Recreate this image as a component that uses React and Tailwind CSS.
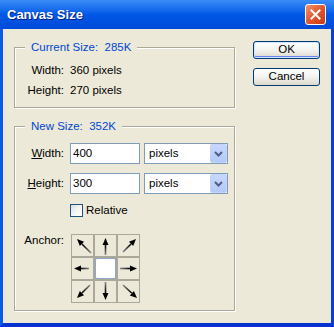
import React from "react";

function Arrow({ from, to, id }) {
  // draws an arrow from tail (from) to tip (to) inside a 21x21 cell
  const [x1, y1] = from;
  const [x2, y2] = to;
  const dx = x2 - x1;
  const dy = y2 - y1;
  const len = Math.sqrt(dx * dx + dy * dy);
  const ux = dx / len;
  const uy = dy / len;
  const hl = 7;
  const hw = 3;
  const bx = x2 - ux * hl;
  const by = y2 - uy * hl;
  const pts = `${x2},${y2} ${bx - uy * hw},${by + ux * hw} ${bx + uy * hw},${by - ux * hw}`;
  return (
    <svg width="21" height="21" viewBox="0 0 21 21">
      <defs>
        <linearGradient id={id} gradientUnits="userSpaceOnUse" x1={x1} y1={y1} x2={x2} y2={y2}>
          <stop offset="0" stopColor="#8a8a8a" />
          <stop offset="0.5" stopColor="#111" />
          <stop offset="1" stopColor="#000" />
        </linearGradient>
      </defs>
      <line x1={x1} y1={y1} x2={bx} y2={by} stroke={`url(#${id})`} strokeWidth="1.6" />
      <polygon points={pts} fill="#000" />
    </svg>
  );
}

function Cell({ children, center }) {
  if (center) {
    return <div className="w-[21px] h-[21px] bg-white border border-[#8fa7c9] rounded-[2px]" />;
  }
  return <div className="w-[21px] h-[21px] bg-[#ece9d8] flex items-center justify-center">{children}</div>;
}

function Select() {
  return (
    <div className="w-[84px] h-[21px] bg-white border border-[#7f9db9] flex items-center">
      <span className="pl-[4px] flex-1">pixels</span>
      <div className="w-[17px] h-[19px] rounded-[2px] bg-gradient-to-b from-[#c7d8fd] to-[#b2c9f8] border border-[#c3d3fd] flex items-center justify-center">
        <svg width="9" height="6" viewBox="0 0 9 6">
          <path d="M1 1 L4.5 4.5 L8 1" fill="none" stroke="#4d6185" strokeWidth="2" />
        </svg>
      </div>
    </div>
  );
}

function Button({ label, isDefault }) {
  return (
    <button
      className={
        "w-[67px] h-[18px] rounded-[3px] border border-[#003c74] bg-gradient-to-b from-[#ffffff] via-[#f3f3ef] to-[#dcd8cc] text-black flex items-center justify-center leading-none " +
        (isDefault ? "shadow-[inset_0_0_0_1px_#cee7ff,inset_0_-1px_0_1px_#6982ee]" : "")
      }
    >
      {label}
    </button>
  );
}

export default function App() {
  return (
    <div className="w-[334px] h-[327px] flex flex-col bg-[#0058e6] font-['Liberation_Sans',Arial,sans-serif] text-[11.5px] text-black">
      {/* title bar */}
      <div className="h-[29px] flex items-center justify-between pl-[7px] pr-[8px] bg-gradient-to-b from-[#3a8cf8] via-[#0058e6] to-[#0049d8]">
        <span className="text-white font-bold text-[13px] [text-shadow:1px_1px_0_#0a1e80]">Canvas Size</span>
        <div className="w-[21px] h-[21px] rounded-[3px] border border-white bg-gradient-to-br from-[#f0926c] via-[#e2562c] to-[#c53a12] flex items-center justify-center">
          <svg width="11" height="11" viewBox="0 0 11 11">
            <path d="M1.5 1.5 L9.5 9.5 M9.5 1.5 L1.5 9.5" stroke="#fff" strokeWidth="2" strokeLinecap="square" />
          </svg>
        </div>
      </div>

      {/* body */}
      <div className="flex-1 flex border-l-[3px] border-l-[#0c5ae8] border-r-[3px] border-r-[#0a3fd4] border-b-[4px] border-b-[#0533cf] bg-[#ece9d8]">
        <div className="pl-[11px] flex flex-col">
          {/* current size */}
          <div className="mt-[18px] w-[221px] h-[61px] border border-[#aca899] shadow-[inset_1px_1px_0_#fff,1px_1px_0_#fff]">
            <div className="-mt-[7px] ml-[10px] px-[6px] w-fit leading-[13px] bg-[#ece9d8] text-[#0046d5] whitespace-pre">Current Size:  285K</div>
            <div className="mt-[9px] grid grid-cols-[49px_auto] gap-x-[6px] gap-y-[6px] leading-[14px]">
              <span className="text-right">Width:</span>
              <span>360 pixels</span>
              <span className="text-right">Height:</span>
              <span>270 pixels</span>
            </div>
          </div>

          {/* new size */}
          <div className="mt-[18px] w-[221px] h-[185px] border border-[#aca899] shadow-[inset_1px_1px_0_#fff,1px_1px_0_#fff]">
            <div className="-mt-[7px] ml-[10px] px-[6px] w-fit leading-[13px] bg-[#ece9d8] text-[#0046d5] whitespace-pre">New Size:  352K</div>

            <div className="mt-[10px] flex items-center">
              <span className="w-[49px] text-right"><u>W</u>idth:</span>
              <div className="ml-[6px] w-[70px] h-[21px] bg-white border border-[#7f9db9] flex items-center pl-[2px]">400</div>
              <div className="ml-[4px]"><Select /></div>
            </div>

            <div className="mt-[9px] flex items-center">
              <span className="w-[49px] text-right"><u>H</u>eight:</span>
              <div className="ml-[6px] w-[70px] h-[21px] bg-white border border-[#7f9db9] flex items-center pl-[2px]">300</div>
              <div className="ml-[4px]"><Select /></div>
            </div>

            <div className="mt-[10px] flex items-center ml-[55px]">
              <div className="w-[13px] h-[13px] border border-[#1c5180] bg-gradient-to-br from-[#dcdcd7] via-[#f5f5f2] to-white" />
              <span className="ml-[3px] leading-[13px]">Relative</span>
            </div>

            <div className="mt-[17px] flex items-start">
              <span className="w-[49px] text-right leading-[13px]">Anchor:</span>
              <div className="ml-[7px] grid grid-cols-3 gap-[2px] p-[1px] bg-[#aca899] w-fit">
                <Cell><Arrow id="a1" from={[19, 18]} to={[5, 4]} /></Cell>
                <Cell><Arrow id="a2" from={[10.5, 20]} to={[10.5, 3]} /></Cell>
                <Cell><Arrow id="a3" from={[5, 17]} to={[18, 4]} /></Cell>
                <Cell><Arrow id="a4" from={[17, 10.5]} to={[2, 10.5]} /></Cell>
                <Cell center />
                <Cell><Arrow id="a6" from={[2, 10.5]} to={[19, 10.5]} /></Cell>
                <Cell><Arrow id="a7" from={[18, 4]} to={[5, 17]} /></Cell>
                <Cell><Arrow id="a8" from={[10.5, 1]} to={[10.5, 19]} /></Cell>
                <Cell><Arrow id="a9" from={[5, 4]} to={[19, 17]} /></Cell>
              </div>
            </div>
          </div>
        </div>

        {/* buttons */}
        <div className="ml-[18px] mt-[12px] flex flex-col gap-[9px]">
          <Button label="OK" isDefault />
          <Button label="Cancel" />
        </div>
      </div>
    </div>
  );
}
